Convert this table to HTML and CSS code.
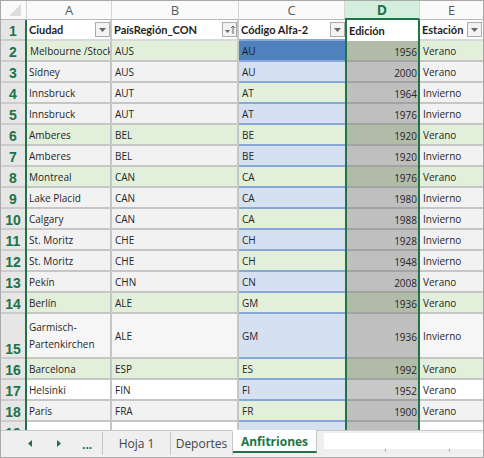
FILE: index.html
```html
<!DOCTYPE html>
<html>
<head>
  <meta charset="utf-8">
  <title>Anfitriones</title>
  <link rel="stylesheet" href="styles.css">
</head>
<body>
  <div class="sheet">
    <div class="grid">
      <!-- column headers -->
      <div class="corner"><svg width="12" height="12"><polygon points="12,0 12,12 0,12" fill="#dcdcdc"/></svg></div>
      <div class="colhead">A</div>
      <div class="colhead">B</div>
      <div class="colhead">C</div>
      <div class="colhead sel">D</div>
      <div class="colhead last">E</div>

      <!-- 1 -->
      <div class="rowhead">1</div>
      <div class="cell th ca"><span>Ciudad</span><span class="filter"><svg width="13" height="13"><polygon points="3,5 10,5 6.5,9" fill="#666"/></svg></span></div>
      <div class="cell th cb"><span>PaísRegión_CON</span><span class="filter"><svg width="13" height="13"><polygon points="2,7 7,7 4.5,10" fill="#666"/><path d="M10 11V3M8 5l2-2 2 2" stroke="#666" fill="none"/></svg></span></div>
      <div class="cell th cc"><span>Código Alfa-2</span><span class="filter"><svg width="13" height="13"><polygon points="3,5 10,5 6.5,9" fill="#666"/></svg></span></div>
      <div class="cell th cd"><span>Edición</span></div>
      <div class="cell th ce"><span>Estación</span><span class="filter"><svg width="13" height="13"><polygon points="3,5 10,5 6.5,9" fill="#666"/></svg></span></div>

      <!-- 2 -->
      <div class="rowhead">2</div>
      <div class="cell ca g indent">Melbourne /Stockholm</div>
      <div class="cell cb g">AUS</div>
      <div class="cell cc act">AU</div>
      <div class="cell cd g">1956</div>
      <div class="cell ce g">Verano</div>

      <!-- 3 -->
      <div class="rowhead">3</div>
      <div class="cell ca">Sídney</div>
      <div class="cell cb">AUS</div>
      <div class="cell cc">AU</div>
      <div class="cell cd">2000</div>
      <div class="cell ce">Verano</div>

      <!-- 4 -->
      <div class="rowhead">4</div>
      <div class="cell ca">Innsbruck</div>
      <div class="cell cb">AUT</div>
      <div class="cell cc g">AT</div>
      <div class="cell cd">1964</div>
      <div class="cell ce">Invierno</div>

      <!-- 5 -->
      <div class="rowhead">5</div>
      <div class="cell ca">Innsbruck</div>
      <div class="cell cb">AUT</div>
      <div class="cell cc">AT</div>
      <div class="cell cd">1976</div>
      <div class="cell ce">Invierno</div>

      <!-- 6 -->
      <div class="rowhead">6</div>
      <div class="cell ca g">Amberes</div>
      <div class="cell cb g">BEL</div>
      <div class="cell cc g">BE</div>
      <div class="cell cd g">1920</div>
      <div class="cell ce g">Verano</div>

      <!-- 7 -->
      <div class="rowhead">7</div>
      <div class="cell ca">Amberes</div>
      <div class="cell cb">BEL</div>
      <div class="cell cc">BE</div>
      <div class="cell cd">1920</div>
      <div class="cell ce">Invierno</div>

      <!-- 8 -->
      <div class="rowhead">8</div>
      <div class="cell ca g">Montreal</div>
      <div class="cell cb g">CAN</div>
      <div class="cell cc g">CA</div>
      <div class="cell cd g">1976</div>
      <div class="cell ce g">Verano</div>

      <!-- 9 -->
      <div class="rowhead">9</div>
      <div class="cell ca">Lake Placid</div>
      <div class="cell cb">CAN</div>
      <div class="cell cc">CA</div>
      <div class="cell cd">1980</div>
      <div class="cell ce">Invierno</div>

      <!-- 10 -->
      <div class="rowhead">10</div>
      <div class="cell ca">Calgary</div>
      <div class="cell cb">CAN</div>
      <div class="cell cc g">CA</div>
      <div class="cell cd">1988</div>
      <div class="cell ce">Invierno</div>

      <!-- 11 -->
      <div class="rowhead">11</div>
      <div class="cell ca">St. Moritz</div>
      <div class="cell cb">CHE</div>
      <div class="cell cc">CH</div>
      <div class="cell cd">1928</div>
      <div class="cell ce">Invierno</div>

      <!-- 12 -->
      <div class="rowhead">12</div>
      <div class="cell ca">St. Moritz</div>
      <div class="cell cb">CHE</div>
      <div class="cell cc g">CH</div>
      <div class="cell cd">1948</div>
      <div class="cell ce">Invierno</div>

      <!-- 13 -->
      <div class="rowhead">13</div>
      <div class="cell ca">Pekín</div>
      <div class="cell cb">CHN</div>
      <div class="cell cc">CN</div>
      <div class="cell cd">2008</div>
      <div class="cell ce">Verano</div>

      <!-- 14 -->
      <div class="rowhead">14</div>
      <div class="cell ca g">Berlín</div>
      <div class="cell cb g">ALE</div>
      <div class="cell cc g">GM</div>
      <div class="cell cd g">1936</div>
      <div class="cell ce g">Verano</div>

      <!-- 15 -->
      <div class="rowhead bottom">15</div>
      <div class="cell ca l wrap">Garmisch-<br>Partenkirchen</div>
      <div class="cell cb l">ALE</div>
      <div class="cell cc">GM</div>
      <div class="cell cd">1936</div>
      <div class="cell ce l">Invierno</div>

      <!-- 16 -->
      <div class="rowhead">16</div>
      <div class="cell ca g">Barcelona</div>
      <div class="cell cb g">ESP</div>
      <div class="cell cc g">ES</div>
      <div class="cell cd g">1992</div>
      <div class="cell ce g">Verano</div>

      <!-- 17 -->
      <div class="rowhead">17</div>
      <div class="cell ca w">Helsinki</div>
      <div class="cell cb w">FIN</div>
      <div class="cell cc">FI</div>
      <div class="cell cd w">1952</div>
      <div class="cell ce w">Verano</div>

      <!-- 18 -->
      <div class="rowhead">18</div>
      <div class="cell ca">París</div>
      <div class="cell cb">FRA</div>
      <div class="cell cc g">FR</div>
      <div class="cell cd">1900</div>
      <div class="cell ce">Verano</div>

      <!-- 19, cut off by the tab bar -->
      <div class="rowhead">19</div>
      <div class="cell ca w"></div>
      <div class="cell cb w"></div>
      <div class="cell cc"></div>
      <div class="cell cd"></div>
      <div class="cell ce w"></div>
    </div>

    <div class="tabs">
      <div class="nav">
        <svg class="arrow" width="4" height="7"><polygon points="4,0 4,7 0,3.5" fill="#217346"/></svg>
        <svg class="arrow" width="4" height="7"><polygon points="0,0 0,7 4,3.5" fill="#217346"/></svg>
        <span class="more">...</span>
      </div>
      <div class="tab">Hoja 1</div>
      <div class="tab">Deportes</div>
      <div class="tab active">Anfitriones</div>
      <div class="scroll">
        <div class="bar"></div>
        <div class="ticks"><i></i><i></i></div>
      </div>
    </div>
  </div>
</body>
</html>
```

FILE: styles.css
```css
body {
  margin: 0;
  background: #fff;
  font-family: "Open Sans", sans-serif;
}

.sheet {
  box-sizing: border-box;
  width: 484px;
  height: 458px;
  border: 1px solid #a9a9a9;
  display: flex;
  flex-direction: column;
  overflow: hidden;
}

.grid {
  flex: 1;
  overflow: hidden;
  display: grid;
  grid-template-columns: 26px 85px 127px 106px 75px 63px;
  grid-template-rows: 19px repeat(14, 21px) 45px repeat(4, 21px);
}

/* column letters */
.corner {
  box-sizing: border-box;
  display: flex;
  justify-content: flex-end;
  align-items: flex-end;
  padding: 0 5px 3px 0;
  background: #fafafa;
  border-right: 1px solid #d4d4d4;
  border-bottom: 1px solid #b9b9b9;
}
.colhead {
  box-sizing: border-box;
  display: flex;
  justify-content: center;
  align-items: center;
  background: #fafafa;
  border-right: 1px solid #d4d4d4;
  border-bottom: 1px solid #b9b9b9;
  color: #5a5a5a;
  font-size: 13px;
}
.colhead.last {
  border-right: 0;
}
.colhead.sel {
  background: #d3eedd;
  color: #217346;
  font-weight: bold;
  font-size: 14px;
  border-bottom: 2px solid #217346;
}

/* row numbers */
.rowhead {
  box-sizing: border-box;
  display: flex;
  justify-content: center;
  align-items: center;
  background: #e6e6e6;
  border-right: 2px solid #217346;
  box-shadow: inset 0 -2px #cccccc;
  color: #217346;
  font-family: "Liberation Sans", sans-serif;
  font-weight: bold;
  font-size: 14px;
}
.rowhead.bottom {
  align-items: flex-end;
  padding-bottom: 2px;
}

/* cells */
.cell {
  box-sizing: border-box;
  display: flex;
  align-items: center;
  padding: 0 2px;
  background: #f2f2f2;
  border-bottom: 2px solid #c6c6c6;
  color: #262626;
  font-size: 10px;
  white-space: nowrap;
  overflow: hidden;
}
.ca, .cb {
  border-right: 2px solid #c6c6c6;
}
.cb, .cc, .ce {
  padding-left: 3px;
}
.indent {
  padding-left: 3px;
}
.cc {
  background: #d5e0f1;
  border-bottom-color: #86a7d7;
}
.cd {
  justify-content: flex-end;
  padding-right: 1px;
  background: #bfbfbf;
  border: 0;
  border-left: 2px solid #217346;
  border-right: 2px solid #217346;
  box-shadow: inset 0 -2px #a3a3a3;
}
.cell.g {
  background: #e2efda;
}
.cell.w {
  background: #ffffff;
}
.cell.l {
  background: #f6f6f6;
}
.cd.g {
  background: #b0bca9;
}
.cd.w {
  background: #c8c8c8;
}
.cell.act {
  background: #4f81bd;
  color: #1b1b1b;
}
.wrap {
  white-space: normal;
  line-height: 17px;
}

/* table header row */
.cell.th {
  justify-content: space-between;
  padding: 0 0 0 2px;
  background: #fff;
  border-bottom-color: #d9d9d9;
  font-family: Lato, sans-serif;
  font-weight: bold;
  font-size: 11px;
  color: #1e1e1e;
}
.cell.th.cc {
  border-bottom-color: #86a7d7;
}
.cell.th.cd {
  justify-content: flex-start;
  padding-left: 2px;
  box-shadow: none;
}
.cell.th.ce {
  padding-right: 1px;
}
.filter {
  box-sizing: border-box;
  width: 15px;
  height: 15px;
  border: 1px solid #ababab;
  background: #f3f3f3;
  display: flex;
}

/* sheet tabs */
.tabs {
  height: 27px;
  flex-shrink: 0;
  box-sizing: border-box;
  display: flex;
  background: #efefef;
  border-top: 1px solid #c9c9c9;
  font-size: 12px;
  color: #444;
}
.nav {
  width: 102px;
  box-sizing: border-box;
  display: flex;
  align-items: center;
  padding-left: 27px;
  margin: 1px 0 2px;
  border-right: 1px solid #c6c6c6;
}
.arrow {
  margin-right: 25px;
}
.arrow + .arrow {
  margin-right: 21px;
}
.more {
  color: #217346;
  font-weight: bold;
  padding-top: 2px;
}
.tab {
  box-sizing: border-box;
  display: flex;
  align-items: center;
  justify-content: center;
  width: 68px;
  margin: 1px 0 2px;
  border-right: 1px solid #c6c6c6;
}
.tab + .tab {
  width: 62px;
}
.tab.active {
  width: 84px;
  margin: -1px 0 4px;
  padding-top: 1px;
  background: #fff;
  color: #217346;
  font-weight: bold;
  border-bottom: 2px solid #217346;
}
.scroll {
  flex: 1;
  margin: 2px 0 0 7px;
  display: flex;
  flex-direction: column;
}
.bar {
  height: 16px;
  background: #fff;
}
.ticks {
  display: flex;
  gap: 63px;
  padding-left: 61px;
  height: 3px;
}
.ticks i {
  width: 1px;
  background: #a9a9a9;
}
```
